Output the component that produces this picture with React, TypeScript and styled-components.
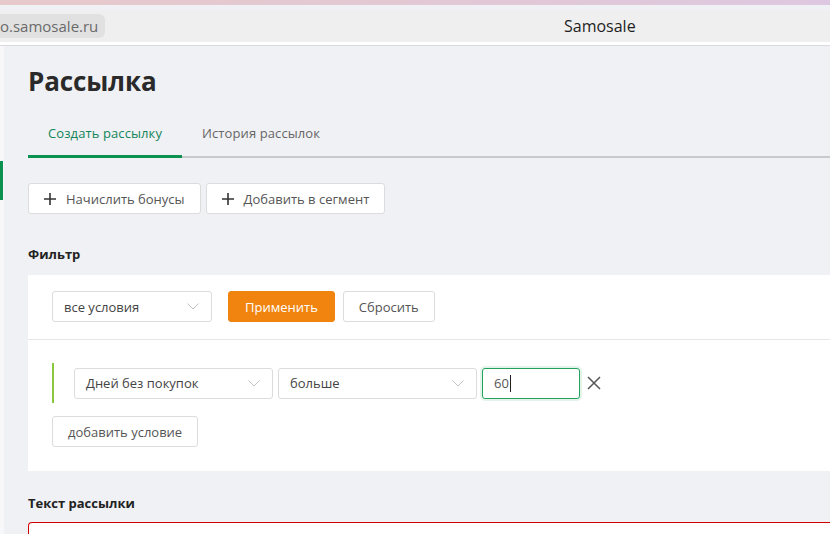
import React from "react";
import styled, { createGlobalStyle } from "styled-components";

const GlobalStyle = createGlobalStyle`
  html, body {
    margin: 0;
    padding: 0;
    background: #f0f1f4;
    font-family: "Open Sans", "Noto Sans", sans-serif;
    overflow: hidden;
  }
  * { box-sizing: border-box; }
`;

const Window = styled.div`
  width: 830px;
  height: 534px;
  overflow: hidden;
  display: flex;
  flex-direction: column;
`;

const TopStrip = styled.div`
  height: 5px;
  background: linear-gradient(90deg, #e7c9cb 0%, #e2c8d6 60%, #dec8e1 100%);
  flex-shrink: 0;
`;

const BrowserBar = styled.div`
  margin-top: 5px;
  height: 32px;
  background: #efefef;
  display: flex;
  align-items: center;
  position: relative;
  flex-shrink: 0;
`;

const UrlPill = styled.div`
  margin-left: -8px;
  height: 24px;
  padding: 0 7px 0 8px;
  border-radius: 6px;
  background: #e1e1e1;
  color: #6a6a6a;
  font-size: 15px;
  display: flex;
  align-items: center;
  white-space: nowrap;
`;

const PageTitle = styled.div`
  position: absolute;
  left: 564px;
  top: 0;
  height: 32px;
  display: flex;
  align-items: center;
  font-size: 16px;
  color: #1e1e1e;
`;

const BarGap = styled.div`
  height: 4px;
  background: #ffffff;
  border-bottom: 1px solid #d9dadf;
  flex-shrink: 0;
`;

const Body = styled.div`
  flex: 1;
  display: flex;
  min-height: 0;
`;

const SideEdge = styled.div`
  width: 4px;
  background: #f8f8fa;
  padding-top: 115px;
  flex-shrink: 0;
`;

const SideMarker = styled.div`
  width: 3px;
  height: 39px;
  background: #0b9150;
`;

const Main = styled.main`
  flex: 1;
  padding: 17px 0 0 24px;
  min-width: 0;
`;

const Heading = styled.h1`
  margin: 0;
  font-size: 26px;
  line-height: 36px;
  font-weight: 700;
  color: #2a2a2a;
  letter-spacing: -0.1px;
`;

const Tabs = styled.div`
  display: flex;
  margin-top: 10px;
  border-bottom: 2px solid #c9c9cb;
  height: 49px;
`;

const Tab = styled.div<{ $active?: boolean }>`
  padding: 13px 20px 0;
  font-size: 13px;
  line-height: 22px;
  letter-spacing: 0.1px;
  color: ${(p) => (p.$active ? "#13855a" : "#666")};
  border-bottom: ${(p) => (p.$active ? "3px solid #0b9150" : "none")};
  margin-bottom: ${(p) => (p.$active ? "-2px" : "0")};
`;

const ActionRow = styled.div`
  display: flex;
  gap: 5px;
  margin-top: 25px;
`;

const Button = styled.button`
  height: 31px;
  padding: 0 15px;
  background: #fff;
  border: 1px solid #dcdcdc;
  border-radius: 3px;
  font-family: inherit;
  font-size: 13px;
  color: #555;
  display: flex;
  align-items: center;
  gap: 10px;
  cursor: pointer;
`;

const PrimaryButton = styled(Button)`
  background: #f0840f;
  border-color: #f0840f;
  color: #fff;
  font-weight: 500;
  padding: 0 16px;
`;

const SectionLabel = styled.div<{ $gap: number }>`
  margin-top: ${(p) => p.$gap}px;
  font-size: 13px;
  line-height: 18px;
  font-weight: 700;
  color: #222;
`;

const Panel = styled.section`
  margin-top: 12px;
  background: #fff;
`;

const PanelTop = styled.div`
  display: flex;
  align-items: center;
  padding: 16px 24px 17px;
  border-bottom: 1px solid #e7e7e7;
`;

const PanelBody = styled.div`
  padding: 23px 24px 24px;
`;

const Select = styled.div<{ $w: number }>`
  width: ${(p) => p.$w}px;
  height: 31px;
  border: 1px solid #dcdcdc;
  border-radius: 3px;
  background: #fff;
  display: flex;
  align-items: center;
  justify-content: space-between;
  padding: 0 12px 0 11px;
  font-size: 13px;
  color: #444;
`;

const Chevron = () => (
  <svg width="12" height="7" viewBox="0 0 12 7" fill="none">
    <path d="M0.5 0.5 L6 6 L11.5 0.5" stroke="#c3c3c3" strokeWidth="1" />
  </svg>
);

const Plus = () => (
  <svg width="12" height="12" viewBox="0 0 12 12">
    <path d="M6 0 V12 M0 6 H12" stroke="#333" strokeWidth="1.6" />
  </svg>
);

const Condition = styled.div`
  display: flex;
  align-items: center;
  gap: 5px;
  height: 40px;
  padding-left: 20px;
  border-left: 2px solid #8cc63f;
`;

const ValueInput = styled.div`
  width: 98px;
  height: 31px;
  border: 1px solid #23a25b;
  border-radius: 3px;
  box-shadow: 0 0 0 2px rgba(35, 162, 91, 0.12);
  display: flex;
  align-items: center;
  padding-left: 11px;
  font-size: 13px;
  color: #555;
`;

const Caret = styled.span`
  display: inline-block;
  width: 1px;
  height: 17px;
  background: #222;
  margin-left: 1px;
`;

const RemoveIcon = () => (
  <svg width="14" height="14" viewBox="0 0 14 14" style={{ marginLeft: 2 }}>
    <path d="M1 1 L13 13 M13 1 L1 13" stroke="#555" strokeWidth="1.5" />
  </svg>
);

const AddRow = styled.div`
  margin-top: 13px;
`;

const MessageBox = styled.div`
  margin-top: 10px;
  height: 40px;
  border: 1px solid #d40000;
  border-right: none;
  border-radius: 4px 0 0 0;
  background: #fff;
`;

export default function App() {
  return (
    <>
      <GlobalStyle />
      <Window>
        <TopStrip />
        <BrowserBar>
          <UrlPill>o.samosale.ru</UrlPill>
          <PageTitle>Samosale</PageTitle>
        </BrowserBar>
        <BarGap />
        <Body>
          <SideEdge>
            <SideMarker />
          </SideEdge>
          <Main>
            <Heading>Рассылка</Heading>
            <Tabs>
              <Tab $active>Создать рассылку</Tab>
              <Tab>История рассылок</Tab>
            </Tabs>
            <ActionRow>
              <Button>
                <Plus />
                Начислить бонусы
              </Button>
              <Button>
                <Plus />
                Добавить в сегмент
              </Button>
            </ActionRow>
            <SectionLabel $gap={31}>Фильтр</SectionLabel>
            <Panel>
              <PanelTop>
                <Select $w={160}>
                  все условия
                  <Chevron />
                </Select>
                <PrimaryButton style={{ marginLeft: 16 }}>Применить</PrimaryButton>
                <Button style={{ marginLeft: 8 }}>Сбросить</Button>
              </PanelTop>
              <PanelBody>
                <Condition>
                  <Select $w={199}>
                    Дней без покупок
                    <Chevron />
                  </Select>
                  <Select $w={199}>
                    больше
                    <Chevron />
                  </Select>
                  <ValueInput>
                    60
                    <Caret />
                  </ValueInput>
                  <RemoveIcon />
                </Condition>
                <AddRow>
                  <Button>добавить условие</Button>
                </AddRow>
              </PanelBody>
            </Panel>
            <SectionLabel $gap={23}>Текст рассылки</SectionLabel>
            <MessageBox />
          </Main>
        </Body>
      </Window>
    </>
  );
}
